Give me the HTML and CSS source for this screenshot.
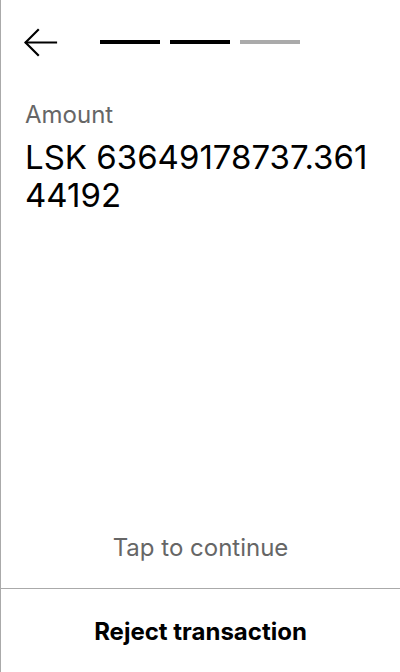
FILE: index.html
```html
<!DOCTYPE html>
<html>
<head>
<meta charset="utf-8">
<link rel="stylesheet" href="styles.css">
</head>
<body>
<div class="screen">
  <header class="header">
    <svg class="back" width="34" height="30" viewBox="0 0 34 30" fill="none" stroke="#000" stroke-width="2.2" stroke-linecap="square">
      <path d="M2 14.5 H32"/>
      <path d="M14 2 L1.5 14.5 L14 27"/>
    </svg>
    <div class="steps">
      <span class="step done"></span>
      <span class="step done"></span>
      <span class="step"></span>
    </div>
  </header>
  <main class="content">
    <div class="label">Amount</div>
    <div class="value">LSK 63649178737.36144192</div>
  </main>
  <div class="tap">Tap to continue</div>
  <footer class="footer">Reject transaction</footer>
</div>
</body>
</html>
```
FILE: styles.css
```css
html, body {
  margin: 0;
  padding: 0;
  background: #fff;
}
.screen {
  box-sizing: border-box;
  width: 400px;
  height: 672px;
  border-left: 1px solid #aaa;
  display: flex;
  flex-direction: column;
  font-family: Inter, "Noto Sans", sans-serif;
  color: #000;
}
.header {
  display: flex;
  align-items: center;
  padding: 28px 0 0 23px;
  height: 30px;
}
.back {
  display: block;
}
.steps {
  display: flex;
  gap: 10px;
  margin-left: 42px;
  margin-top: -2px;
}
.step {
  display: block;
  width: 60px;
  height: 4px;
  background: #aaa;
}
.step.done {
  background: #000;
}
.content {
  padding: 42px 24px 0 24px;
  flex: 1;
}
.label {
  font-size: 24px;
  line-height: 29px;
  color: #666;
}
.value {
  margin-top: 9px;
  font-size: 33px;
  line-height: 38px;
  word-break: break-all;
}
.tap {
  text-align: center;
  font-size: 24px;
  color: #666;
  line-height: 29px;
  padding-bottom: 26px;
}
.footer {
  border-top: 1px solid #aaa;
  height: 84px;
  box-sizing: border-box;
  display: flex;
  align-items: center;
  justify-content: center;
  padding-top: 1px;
  font-size: 24px;
  font-weight: 700;
}
```
